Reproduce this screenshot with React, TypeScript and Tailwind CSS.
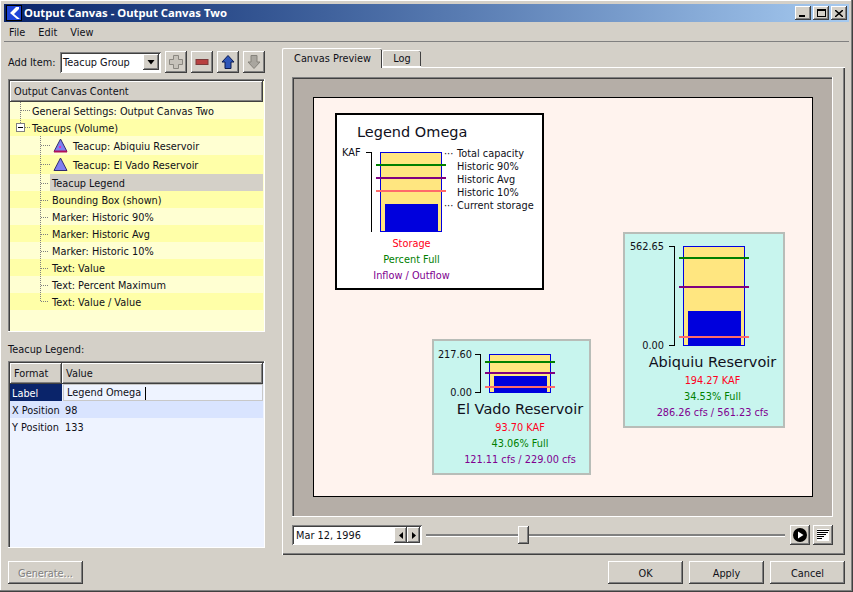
import React from "react";

const raised = "shadow-[inset_-1px_-1px_0_#404040,inset_1px_1px_0_#fff,inset_-2px_-2px_0_#808080]";
const headerCell = "shadow-[inset_-1px_-1px_0_#404040,inset_1px_1px_0_#fff,inset_-2px_-2px_0_#808080]";
const sunken = "shadow-[inset_1px_1px_0_#808080,inset_-1px_-1px_0_#fff,inset_2px_2px_0_#404040]";

function Logo() {
  return (
    <svg width="16" height="16" viewBox="0 0 16 16" className="shrink-0">
      <rect width="16" height="16" fill="#1f45d8" />
      <rect x="0.5" y="0.5" width="15" height="15" fill="none" stroke="#000" strokeWidth="1" />
      <path d="M10 2 L4 8 L11 14 L14 14 L8 9 L13 4 L13 2 Z" fill="#fff" />
    </svg>
  );
}

function WinBtn({ children, cls = "" }: { children: React.ReactNode; cls?: string }) {
  return <div className={`w-[16px] h-[14px] bg-[#d4d0c8] ${raised} flex items-center justify-center ${cls}`}>{children}</div>;
}

function ToolBtn({ kind }: { kind: "plus" | "minus" | "up" | "down" }) {
  return (
    <div className={`w-[22px] h-[22px] bg-[#d4d0c8] ${raised} flex items-center justify-center`}>
      <svg width="16" height="16" viewBox="0 0 16 16">
        {kind === "plus" && <path d="M5.5 1.5h5v4h4v5h-4v4h-5v-4h-4v-5h4z" fill="#c6c2ba" stroke="#8a8780" />}
        {kind === "minus" && <rect x="2" y="5.5" width="12" height="5" fill="#b84040" stroke="#7d3a3a" />}
        {kind === "up" && <path d="M8 1.5 L14 8 H11 V14.5 H5 V8 H2 Z" fill="#2e55b8" stroke="#0a1a50" />}
        {kind === "down" && <path d="M8 14.5 L14 8 H11 V1.5 H5 V8 H2 Z" fill="#a9a69f" stroke="#85827b" />}
      </svg>
    </div>
  );
}

function Tri({ mark }: { mark?: boolean }) {
  return (
    <svg width="15" height="15" viewBox="0 0 15 15" className="shrink-0">
      <path d="M7.5 1 L14 13.5 H1 Z" fill="#7f7ff0" stroke="#302a70" />
      {mark && <rect x="1" y="12.5" width="13" height="2" fill="#b0105a" />}
      {mark && <rect x="6" y="8" width="2" height="2" fill="#e030c0" />}
    </svg>
  );
}

const rows: { t: string; indent: number; h: number; bg: string; icon?: number; sel?: boolean }[] = [
  { t: "General Settings: Output Canvas Two", indent: 22, h: 17, bg: "bg-[#ffffd2]" },
  { t: "Teacups (Volume)", indent: 22, h: 17, bg: "bg-[#ffffa8]" },
  { t: "Teacup: Abiquiu Reservoir", indent: 63, h: 19, bg: "bg-[#ffffd2]", icon: 1 },
  { t: "Teacup: El Vado Reservoir", indent: 63, h: 19, bg: "bg-[#ffffa8]", icon: 2 },
  { t: "Teacup Legend", indent: 42, h: 17, bg: "bg-[#ffffd2]", sel: true },
  { t: "Bounding Box (shown)", indent: 42, h: 17, bg: "bg-[#ffffa8]" },
  { t: "Marker: Historic 90%", indent: 42, h: 17, bg: "bg-[#ffffd2]" },
  { t: "Marker: Historic Avg", indent: 42, h: 17, bg: "bg-[#ffffa8]" },
  { t: "Marker: Historic 10%", indent: 42, h: 17, bg: "bg-[#ffffd2]" },
  { t: "Text: Value", indent: 42, h: 17, bg: "bg-[#ffffa8]" },
  { t: "Text: Percent Maximum", indent: 42, h: 17, bg: "bg-[#ffffd2]" },
  { t: "Text: Value / Value", indent: 42, h: 17, bg: "bg-[#ffffa8]" },
];

function Tree() {
  return (
    <div className="relative flex-1 bg-[#ffffd2] overflow-hidden">
      {rows.map((r) => (
        <div key={r.t} className={`relative flex items-center ${r.bg}`} style={{ height: r.h, paddingLeft: r.sel ? 0 : r.indent }}>
          {r.sel ? (
            <div className="ml-[40px] pl-[2px] flex-1 h-full flex items-center bg-[#d4d0c8]">
              <span className="pt-[2px]">{r.t}</span>
            </div>
          ) : (
            <span className="pt-[2px]">{r.t}</span>
          )}
          {r.icon && (
            <span className="absolute left-[43px] top-[2px]">
              <Tri mark={r.icon === 1} />
            </span>
          )}
        </div>
      ))}
      <svg width="60" height="210" className="absolute left-0 top-0" shapeRendering="crispEdges">
        <g stroke="#808080" strokeDasharray="1 1" fill="none">
          <path d="M10.5 0 V21" />
          <path d="M10.5 8.5 H20" />
          <path d="M15 25.5 H21" />
          <path d="M30.5 34 V199" />
          <path d="M31 43.5 H41 M31 62.5 H41 M31 81.5 H39 M31 98.5 H39 M31 115.5 H39 M31 132.5 H39 M31 149.5 H39 M31 166.5 H39 M31 183.5 H39 M31 199.5 H39" />
        </g>
        <rect x="6.5" y="21.5" width="8" height="8" fill="#fff" stroke="#808080" />
        <path d="M8 25.5 H13" stroke="#000" />
      </svg>
    </div>
  );
}

function Cup({ height, lines, fill, legend }: { height: number; lines: [number, number, number]; fill: number; legend?: boolean }) {
  return (
    <svg width="90" height={height + 1} className="block shrink-0" shapeRendering="crispEdges">
      <path d={legend ? `M1 0.5 H6.5 V${height}` : `M1 0.5 H6.5 V${height - 0.5} H1`} fill="none" stroke="#000" />
      <rect x="15.5" y="0.5" width="61" height={height - 1} fill="#ffe680" stroke="#0000e0" />
      <rect x="20" y={height - fill - 1} width="53" height={fill} fill="#0000dd" />
      <rect x="11" y={lines[0]} width="70" height="2" fill="#008000" />
      <rect x="11" y={lines[1]} width="70" height="2" fill="#800080" />
      <rect x="11" y={lines[2]} width="70" height="2" fill="#ff6a6a" />
    </svg>
  );
}

function Stats({ a, b, c }: { a: string; b: string; c: string }) {
  return (
    <div className="flex flex-col items-center leading-[16px] whitespace-nowrap">
      <span className="text-[#ff0020]">{a}</span>
      <span className="text-[#008000]">{b}</span>
      <span className="text-[#800090]">{c}</span>
    </div>
  );
}

function Card({
  cls, top, height, lines, fill, name, a, b, c, pad, ml,
}: {
  cls: string; top: string; height: number; lines: [number, number, number]; fill: number; name: string; a: string; b: string; c: string; pad: string; ml: string;
}) {
  return (
    <div className={`absolute bg-[#c8f5ee] border-2 border-[#b8bdb8] flex flex-col ${cls}`}>
      <div className={`flex items-stretch ${pad}`}>
        <div className="flex flex-col justify-between items-end w-[38px] -my-[6px] leading-[14px]">
          <span>{top}</span>
          <span>0.00</span>
        </div>
        <div className={ml}>
          <Cup height={height} lines={lines} fill={fill} />
        </div>
      </div>
      <div className="text-center text-[14.5px] leading-[22px] text-[#10101c] pl-[17px] whitespace-nowrap">{name}</div>
      <div className="pl-[17px]">
        <Stats a={a} b={b} c={c} />
      </div>
    </div>
  );
}

function Legend() {
  return (
    <div className="absolute left-[21px] top-[15px] w-[209px] h-[177px] bg-white border-2 border-black">
      <div className="pl-[20px] pt-[7px] text-[14.5px] leading-[20px] text-[#10101c]">Legend Omega</div>
      <div className="flex mt-[10px] ml-[5px] h-[80px]">
        <span className="w-[23px] -mt-[6px] leading-[14px]">KAF</span>
        <Cup height={80} lines={[12, 25, 38]} fill={27} legend />
        <div className="flex flex-col -mt-[5px] ml-[2px] relative leading-[13px] whitespace-nowrap">
          <span>Total capacity</span>
          <span>Historic 90%</span>
          <span>Historic Avg</span>
          <span>Historic 10%</span>
          <span>Current storage</span>
          <span className="absolute -left-[13px] top-[0px]">···</span>
          <span className="absolute -left-[13px] top-[52px]">···</span>
        </div>
      </div>
      <div className="w-[146px] mt-[4px] pl-[3px]">
        <Stats a="Storage" b="Percent Full" c="Inflow / Outflow" />
      </div>
    </div>
  );
}

export default function App() {
  return (
    <div className="w-[853px] h-[592px] bg-[#d4d0c8] overflow-hidden flex flex-col text-[9.75px] leading-[14px] text-[#101018] shadow-[inset_-1px_-1px_0_#404040,inset_-2px_-2px_0_#808080,inset_1px_1px_0_#fff]" style={{ fontFamily: '"DejaVu Sans", "Noto Sans", sans-serif' }}>
      <div className="mx-[4px] mt-[4px] h-[18px] shrink-0 flex items-center pl-[2px] pr-[2px] bg-gradient-to-r from-[#0a246a] to-[#a6caf0]">
        <Logo />
        <span className="ml-[2px] font-bold text-white text-[11.3px]" style={{ fontFamily: '"Noto Sans", sans-serif' }}>Output Canvas - Output Canvas Two</span>
        <div className="ml-auto flex">
          <WinBtn>
            <span className="block w-[6px] h-[2px] bg-black mt-[6px] -ml-[2px]" />
          </WinBtn>
          <WinBtn cls="mx-[2px]">
            <span className="block w-[9px] h-[8px] border border-black border-t-2" />
          </WinBtn>
          <WinBtn>
            <svg width="8" height="7" viewBox="0 0 8 7">
              <path d="M0 0 L8 7 M8 0 L0 7" stroke="#000" strokeWidth="1.5" />
            </svg>
          </WinBtn>
        </div>
      </div>
      <div className="mx-[4px] h-[18px] mt-[1px] shrink-0 flex items-center gap-[13px] pl-[5px] pt-[1px]">
        <span>File</span>
        <span>Edit</span>
        <span>View</span>
      </div>
      <div className="mx-[4px] h-[1px] bg-[#808080] shrink-0" />

      <div className="flex flex-1 min-h-0 pl-[8px] pr-[8px] pt-[8px]">
        <div className="w-[257px] mr-[17px] flex flex-col shrink-0">
          <div className="flex items-center h-[24px] shrink-0">
            <span className="w-[52px] pt-[1px]">Add Item:</span>
            <div className={`w-[101px] h-[21px] bg-white ${sunken} flex items-center pl-[3px] pr-[2px] mr-[4px]`}>
              <span className="flex-1 pt-[1px]">Teacup Group</span>
              <div className={`w-[16px] h-[16px] bg-[#d4d0c8] ${raised} flex items-center justify-center`}>
                <svg width="8" height="5" viewBox="0 0 8 5"><path d="M0.5 0 H7.5 L4 4.5 Z" fill="#000" /></svg>
              </div>
            </div>
            <div className="flex gap-[4px]">
              <ToolBtn kind="plus" />
              <ToolBtn kind="minus" />
              <ToolBtn kind="up" />
              <ToolBtn kind="down" />
            </div>
          </div>
          <div className="mt-[5px] h-[253px] shrink-0 flex flex-col p-[2px] pb-[1px] pr-[1px] bg-[#ffffd2] border-r border-b border-white shadow-[inset_1px_1px_0_#808080,inset_2px_2px_0_#404040]">
            <div className={`h-[21px] shrink-0 flex items-center pl-[4px] bg-[#d4d0c8] ${headerCell}`}>Output Canvas Content</div>
            <Tree />
          </div>
          <div className="mt-[11px] h-[14px] shrink-0">Teacup Legend:</div>
          <div className="mt-[4px] h-[187px] shrink-0 flex flex-col p-[2px] pb-[1px] pr-[1px] bg-[#eef3ff] border-r border-b border-white shadow-[inset_1px_1px_0_#808080,inset_2px_2px_0_#404040]">
            <div className="flex h-[21px] shrink-0">
              <div className={`w-[52px] flex items-center pl-[4px] bg-[#d4d0c8] ${headerCell}`}>Format</div>
              <div className={`flex-1 flex items-center pl-[4px] bg-[#d4d0c8] ${headerCell}`}>Value</div>
            </div>
            <div className="flex h-[17px]">
              <div className="w-[52px] flex items-center pl-[2px] pt-[2px] bg-[#0a246a] text-white">Label</div>
              <div className="flex-1 flex items-center ml-[1px] pl-[3px] pt-[1px] bg-[#eef3ff] border border-[#c8c8c8]">
                Legend Omega
                <span className="ml-[4px] w-[1px] h-[13px] bg-black" />
              </div>
            </div>
            <div className="flex h-[17px] items-center pt-[2px] bg-[#d9e4ff]">
              <span className="w-[55px] pl-[2px] whitespace-nowrap">X Position</span>
              <span>98</span>
            </div>
            <div className="flex h-[17px] items-center pt-[2px]">
              <span className="w-[55px] pl-[2px] whitespace-nowrap">Y Position</span>
              <span>133</span>
            </div>
          </div>
        </div>

        <div className="flex-1 flex flex-col min-w-0 -mt-[3px]">
          <div className="flex items-end h-[20px] shrink-0 relative z-10">
            <div className="w-[100px] h-[20px] bg-[#d4d0c8] border-l border-t border-white rounded-t-[2px] shadow-[inset_-1px_0_0_#404040] flex items-center justify-center -mb-[1px]">Canvas Preview</div>
            <div className="w-[39px] h-[17px] bg-[#d4d0c8] border-l border-t border-white border-b rounded-t-[2px] shadow-[inset_-1px_0_0_#404040] flex items-center justify-center">Log</div>
          </div>
          <div className="w-[563px] h-[488px] shrink-0 border-l border-t border-white shadow-[inset_-1px_-1px_0_#404040,inset_-2px_-2px_0_#808080] pl-[9px] pt-[9px]">
            <div className="w-[541px] h-[440px] bg-[#b5aea7] border-r border-b border-white shadow-[inset_1px_1px_0_#808080,inset_2px_2px_0_#404040] pl-[21px] pt-[20px]">
              <div className="relative w-[500px] h-[400px] bg-[#fff3ee] border border-black">
                <Legend />
                <Card
                  cls="left-[118px] top-[241px] w-[159px] h-[136px]"
                  top="217.60"
                  height={39}
                  lines={[7, 18, 32]}
                  fill={16}
                  name="El Vado Reservoir"
                  a="93.70 KAF"
                  b="43.06% Full"
                  c="121.11 cfs / 229.00 cfs"
                  pad="pt-[13px] pb-[4px]"
                  ml="ml-[2px]"
                />
                <Card
                  cls="left-[309px] top-[134px] w-[162px] h-[196px]"
                  top="562.65"
                  height={100}
                  lines={[11, 40, 90]}
                  fill={34}
                  name="Abiquiu Reservoir"
                  a="194.27 KAF"
                  b="34.53% Full"
                  c="286.26 cfs / 561.23 cfs"
                  pad="pl-[1px] pt-[12px] pb-[4px]"
                  ml="ml-[4px]"
                />
              </div>
            </div>
            <div className="flex items-center mt-[8px] w-[541px]">
              <div className={`w-[130px] h-[20px] bg-white ${sunken} flex items-center pl-[4px] pr-[2px]`}>
                <span className="flex-1 pt-[1px]">Mar 12, 1996</span>
                <div className={`w-[13px] h-[16px] bg-[#d4d0c8] ${raised} flex items-center justify-center`}>
                  <svg width="4" height="7" viewBox="0 0 4 7"><path d="M4 0 V7 L0 3.5 Z" fill="#000" /></svg>
                </div>
                <div className={`w-[13px] h-[16px] bg-[#d4d0c8] ${raised} flex items-center justify-center`}>
                  <svg width="4" height="7" viewBox="0 0 4 7"><path d="M0 0 V7 L4 3.5 Z" fill="#000" /></svg>
                </div>
              </div>
              <div className="relative ml-[4px] w-[359px] h-[3px] bg-[#808080] border-b border-white">
                <div className={`absolute left-[92px] -top-[8px] w-[11px] h-[18px] bg-[#d4d0c8] ${raised}`} />
              </div>
              <div className={`ml-[5px] w-[20px] h-[20px] bg-[#d4d0c8] ${raised} flex items-center justify-center`}>
                <svg width="14" height="14" viewBox="0 0 14 14">
                  <circle cx="7" cy="7" r="7" fill="#000" />
                  <path d="M5 3.5 L10.5 7 L5 10.5 Z" fill="#fff" />
                </svg>
              </div>
              <div className={`ml-[3px] w-[20px] h-[20px] bg-[#d4d0c8] ${raised} flex items-center justify-center`}>
                <svg width="12" height="12" viewBox="0 0 12 12" shapeRendering="crispEdges">
                  <rect width="12" height="12" fill="#fff" />
                  <path d="M0 1.5H12 M0 3.5H11 M0 5.5H9 M0 7.5H7 M0 9.5H5" stroke="#000" />
                </svg>
              </div>
            </div>
          </div>
        </div>
      </div>

      <div className="flex items-center h-[23px] mb-[8px] pl-[8px] pr-[8px] shrink-0">
        <div className={`w-[75px] h-[23px] pt-[2px] ${raised} flex items-center justify-center text-[#808080] [text-shadow:1px_1px_0_#fff]`}>Generate...</div>
        <div className="ml-auto flex gap-[6px]">
          <div className={`w-[75px] h-[23px] pt-[2px] ${raised} flex items-center justify-center`}>OK</div>
          <div className={`w-[75px] h-[23px] pt-[2px] ${raised} flex items-center justify-center`}>Apply</div>
          <div className={`w-[75px] h-[23px] pt-[2px] ${raised} flex items-center justify-center`}>Cancel</div>
        </div>
      </div>
    </div>
  );
}
